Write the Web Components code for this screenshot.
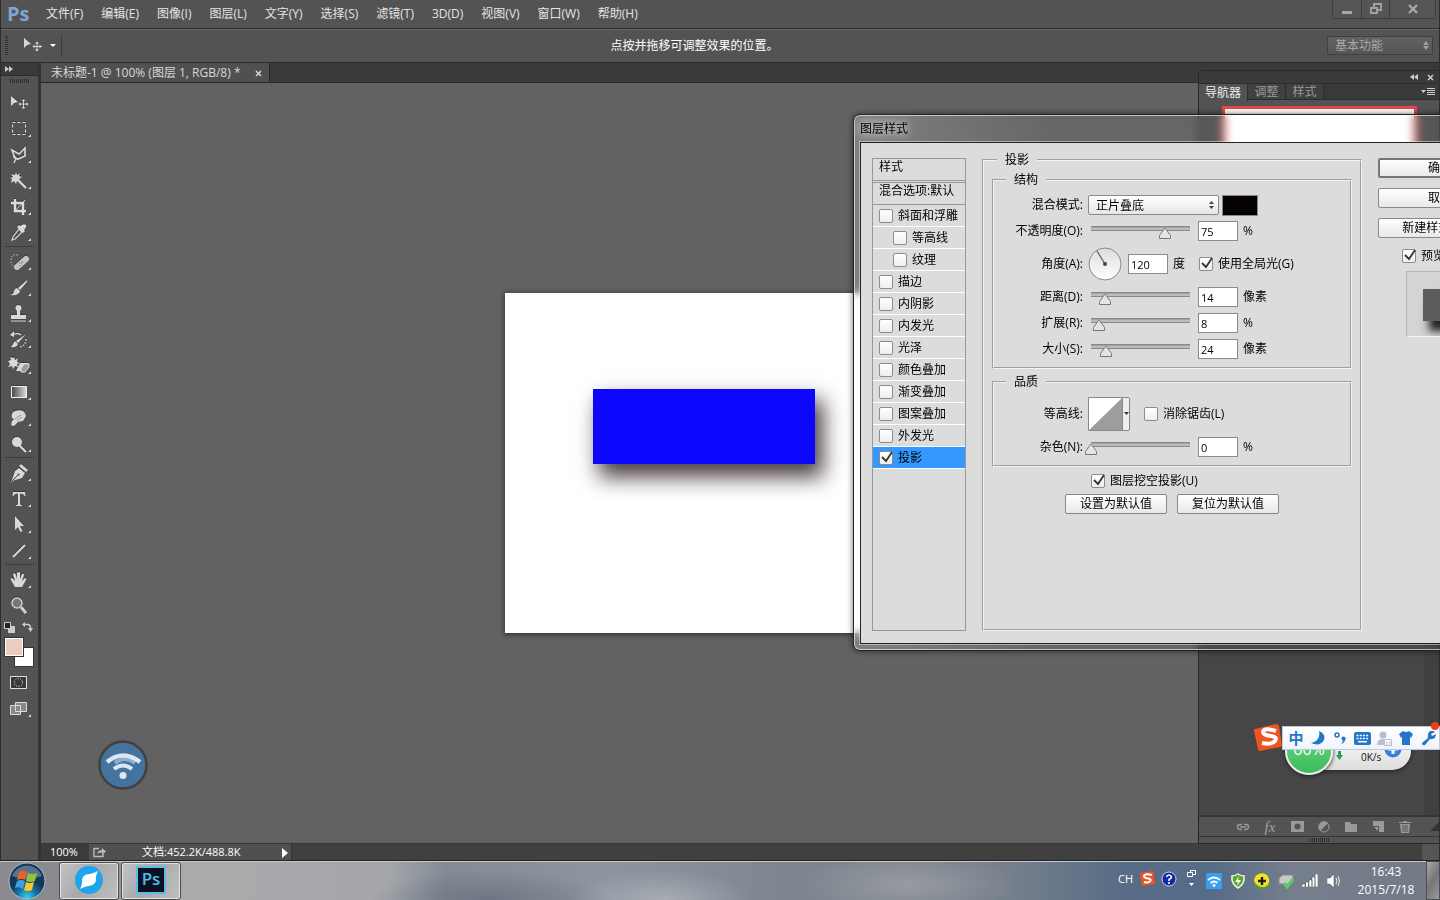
<!DOCTYPE html>
<html lang="zh-CN">
<head>
<meta charset="utf-8">
<title>未标题-1 @ 100%</title>
<style>
  html, body { height: 100%; margin: 0; }
  body {
    overflow: hidden;
    font: 12px/16px "Open Sans", "Noto Sans CJK SC", sans-serif;
    color: #e4e4e4;
    background: #535353;
  }
</style>
</head>
<body>
<ps-desktop></ps-desktop>

<script>
const define = (name, css, markup) => {
  customElements.define(name, class extends HTMLElement {
    connectedCallback() {
      if (this.shadowRoot) return;
      const template = document.createElement('template');
      const html = typeof markup === 'function' ? markup(this) : markup;
      template.innerHTML = `<style>*{box-sizing:border-box}
        button,input,select{font:inherit;color:inherit;margin:0}
        ${css}</style>${html}`;
      this.attachShadow({ mode: 'open' }).append(template.content.cloneNode(true));
    }
  });
};

/* ---------- menu bar ---------- */
define('ps-menubar', `
  :host { display: flex; align-items: center; height: 28px; background: #535353; padding-left: 6px; }
  .logo { width: 25px; font: bold 20px/28px "Open Sans", sans-serif; color: #7ba6d6; margin-right: 5px; }
  nav { display: flex; flex: 1; }
  nav button { background: none; border: 0; padding: 0 9px; line-height: 28px; white-space: nowrap; }
  .win { display: flex; align-self: flex-start; height: 19px; margin-right: 3px; border: 1px solid #3e3e3e; border-top: 0; border-radius: 0 0 3px 3px; }
  .win button { width: 28px; padding: 0; border: 0; background: #555; display: grid; place-items: center; }
  .win button + button { border-left: 1px solid #3e3e3e; }
  .win button:last-child { width: 46px; }
`, `
  <span class="logo">Ps</span>
  <nav aria-label="菜单">
    ${['文件(F)', '编辑(E)', '图像(I)', '图层(L)', '文字(Y)', '选择(S)', '滤镜(T)', '3D(D)', '视图(V)', '窗口(W)', '帮助(H)']
      .map(t => `<button>${t}</button>`).join('')}
  </nav>
  <div class="win">
    <button aria-label="最小化"><svg width="12" height="14"><path d="M1 9h10v3H1z" fill="#a8a8a8"/></svg></button>
    <button aria-label="还原"><svg width="14" height="14" fill="none" stroke="#a0a0a0" stroke-width="2"><path d="M5 7V2h7v6H9"/><path d="M2 6h6v5H2z"/></svg></button>
    <button aria-label="关闭"><svg width="12" height="12" stroke="#a8a8a8" stroke-width="2.4"><path d="M2 2l8 8M10 2l-8 8"/></svg></button>
  </div>`);

/* ---------- options bar ---------- */
define('ps-optionsbar', `
  :host { display: grid; grid-template-columns: auto 1fr auto; align-items: center; height: 35px;
    background: #535353; border-top: 1px solid #2e2e2e; border-bottom: 1px solid #2e2e2e; box-shadow: inset 0 1px #666; }
  .left { display: flex; align-items: center; padding-left: 4px; }
  .grip { width: 3px; height: 20px; background: repeating-linear-gradient(#333 0 1px, transparent 1px 2px); margin-right: 15px; }
  .tool { display: flex; align-items: center; gap: 8px; padding: 0 5px 0 0; border: 0; border-right: 1px solid #3c3c3c; background: none; height: 23px; }
  p { margin: 0; color: #fff; text-align: center; }
  .right { position: relative; margin-right: 6px; }
  select { appearance: none; width: 106px; height: 19px; padding: 0 7px; line-height: 16px; border: 1px solid #404040; border-radius: 2px;
    background: linear-gradient(#626262, #555); color: #a8a8a8; display: block; }
  .right svg { position: absolute; right: 4px; top: 5px; }
`, `
  <div class="left"><span class="grip"></span>
    <button class="tool" aria-label="移动工具">
      <svg width="19" height="17" fill="#d8d8d8"><path d="M1 1l7 6-4 1-3 3z"/><path d="M14 5v9M10 9.500h9" stroke="#d8d8d8"/><path d="M14 4.500l2 2h-4zM14 14.500l2-2h-4zM9.500 9.500l2-2v4zM18.500 9.500l-2-2v4z"/></svg>
      <svg width="6" height="4" fill="#fff"><path d="M0 0h6L3 3z"/></svg>
    </button></div>
  <p>点按并拖移可调整效果的位置。</p>
  <div class="right"><select aria-label="工作区"><option>基本功能</option></select>
    <svg width="6" height="9" fill="#a0a0a0"><path d="M0 4l3-4 3 4zM0 5h6L3 9z"/></svg></div>`);

/* ---------- toolbox ---------- */
const glyphs = {
  move: '<path d="M10 6l7 6-4 1-3 3z"/><path d="M22.500 10v8M18.500 14h8" stroke="#d8d8d8"/><path d="M22.500 9l2 2h-4zM22.500 19l2-2h-4zM17.500 14l2-2v4zM27.500 14l-2-2v4z"/>',
  marquee: '<path d="M11.500 6.500h13v12h-13z" fill="none" stroke="#e0e0e0" stroke-dasharray="3 2"/>',
  lasso: '<path d="M11 8l7 4 6-6v8l-7 3-3-1z" fill="none" stroke="#d8d8d8" stroke-width="1.700"/><path d="M12 15q3-1 3 2-1 1-2 4" fill="none" stroke="#d8d8d8" stroke-width="1.500"/>',
  wand: '<path d="M15 4l1 3 3-2-1 3 3 1-3 2 2 3-4-1-1 3-2-3-3 2 1-4-2-1 3-1-2-3 4 1z"/><path d="M17 12l8 8" stroke="#d8d8d8" stroke-width="2.400"/>',
  crop: '<path d="M14 5v12h11M10 9h12v12" fill="none" stroke="#dcdcdc" stroke-width="2.400"/><path d="M15 16l9-10" stroke="#dcdcdc"/>',
  dropper: '<path d="M19 6q4-3 6-1 1 2-2 5l1 1-2 2-6-6 2-2z"/><path d="M18 9l3 3-7 7-3 1 1-3z" fill="none" stroke="#dcdcdc" stroke-width="1.200"/>',
  heal: '<path d="M17 6q-7-2-7 6 0 3 2 5" fill="none" stroke="#ddd" stroke-dasharray="1.500 1.500"/><path d="M16 18l9-8" stroke="#c4c4c4" stroke-width="6" stroke-linecap="round"/><path d="M18 14l5-1M19 17l3-5" stroke="#777" stroke-dasharray="1 1.500"/>',
  brush: '<path d="M26 5q1 1-1 3l-6 7-2-2z"/><path d="M16 13l3 3q-1 5-10 4 4-1 4-4 1-3 3-3z"/>',
  stamp: '<circle cx="17.500" cy="7" r="3"/><path d="M16 9h3v5h6v4H10v-4h6zM10 19.500h15v1H10z"/>',
  history: '<path d="M25 7l-8 9-2-2zM14 14l3 3q-2 4-7 3 2-3 4-6z"/><path d="M11 8q6-3 9 0" fill="none" stroke="#d0d0d0" stroke-width="1.500"/><path d="M9 8l4-4v6z"/><path d="M25 12q0 7-7 8" fill="none" stroke="#d0d0d0" stroke-width="1.500" stroke-dasharray="1.500 1.500"/>',
  eraser: '<path d="M13 4l1 3 3-2-1 4 3 1-3 1 1 3-3-1-2 3-1-3-4 1 2-3-2-3 3-1-1-3 3 1z"/><path d="M19 10h9l-4 8h-9z"/><path d="M20 16l3-5h5v3l-4 5h-4z" fill="#999" stroke="#ddd"/>',
  gradient: '<defs><linearGradient id="g"><stop stop-color="#444"/><stop offset="1" stop-color="#ddd"/></linearGradient></defs><path d="M10.500 7.500h15v11h-15z" fill="url(#g)" stroke="#f0f0f0"/>',
  smudge: '<path d="M12 7q5-3 10-1 3 2 3 5l-3 5-5 1-4 4-3-1 1-4 2-2-2-1q-1-3 1-6z"/><path d="M14 14l6-4M16 16l5-4" stroke="#999"/>',
  dodge: '<circle cx="16" cy="11" r="5"/><path d="M18 14l7 7" stroke="#ddd" stroke-width="2"/>',
  pen: '<path d="M18 8l6 5-3 5-7 2-4 2 2-5 2-6z"/><path d="M20 4l7 6-2 2-7-6z"/><path d="M11 21l6-6" stroke="#444"/><circle cx="17.500" cy="14.500" r="1" fill="#444"/>',
  type: '<path d="M12 6h12l.5 4h-1q-.5-2.500-4.500-2.500V18q0 1 2 1v1h-6v-1q2 0 2-1V7.500q-4 0-4.500 2.500h-1z"/>',
  select: '<path d="M14 4l9 10h-4l2.500 5-2 1-2.500-5-3 3z"/>',
  line: '<path d="M12 19L24 7" stroke="#ddd" stroke-width="1.800"/>',
  hand: '<path d="M14 20l-4-7q-1-2 1-2l3 3-2-7q2-2 3 1l1 4V6q2-2 3 0v6l2-5q2-1 2 1l-2 6 3-3q2 0 1 2l-4 7z"/>',
  zoom: '<circle cx="16" cy="10" r="5" fill="#777" stroke="#ccc" stroke-width="1.500"/><path d="M20 14l5 6" stroke="#d0d0d0" stroke-width="3"/>'
};
define('ps-tool', `
  :host { display: block; height: 26px; }
  button { display: block; border: 0; padding: 0; background: none; height: 26px; width: 37px; }
  svg { display: block; fill: #d8d8d8; filter: drop-shadow(0 -1px 0 #3a3a3a); }
`, el => `<button aria-label="${el.getAttribute('label')}"><svg width="37" height="26">${glyphs[el.getAttribute('glyph')]}
  ${el.hasAttribute('single') ? '' : '<path d="M30 18v3h-3z"/>'}</svg></button>`);

define('ps-toolbox', `
  :host { display: flex; flex-direction: column; width: 40px; background: #535353; border-right: 3px solid #333; }
  .head { height: 13px; background: #3a3a3a; border-bottom: 1px solid #2b2b2b; padding: 3px 4px; }
  .head svg { display: block; }
  .grip { height: 14px; display: grid; place-items: start center; padding-top: 3px; }
  .grip i { width: 19px; height: 4px; background: repeating-linear-gradient(90deg, #303030 0 1px, transparent 1px 2px); }
  hr { margin: 0 4px; height: 3px; border: 0; border-top: 1px solid #3a3a3a; width: 29px; }
  .mini { display: flex; justify-content: space-between; height: 18px; padding: 3px 5px 0 3px; }
  .colors { display: grid; height: 32px; padding-left: 3px; grid-template: 10px 10px 10px / 10px 10px 10px; }
  .colors button { border: 1px solid #333; padding: 0; }
  .fg { grid-area: 1 / 1 / 3 / 3; background: #eacdbf; box-shadow: inset 0 0 0 1px #fff; z-index: 1; }
  .bg { grid-area: 2 / 2 / 4 / 4; background: #fff; }
  .mode { border: 0; padding: 0; background: none; height: 27px; display: block; }
  .mode svg { display: block; }
`, () => {
  const tool = ([glyph, label]) => `<ps-tool glyph="${glyph}" label="${label}"${['move', 'zoom'].includes(glyph) ? ' single' : ''}></ps-tool>`;
  const groups = [
    [['move', '移动'], ['marquee', '选框'], ['lasso', '套索'], ['wand', '魔棒'], ['crop', '裁剪'], ['dropper', '吸管']],
    [['heal', '修复画笔'], ['brush', '画笔'], ['stamp', '图章'], ['history', '历史画笔'], ['eraser', '橡皮擦'], ['gradient', '渐变'], ['smudge', '涂抹'], ['dodge', '减淡']],
    [['pen', '钢笔'], ['type', '文字'], ['select', '路径选择'], ['line', '直线']],
    [['hand', '抓手'], ['zoom', '缩放']]];
  return `<div class="head"><svg width="8" height="6" fill="#ccc"><path d="M0 0l4 3-4 3zM4 0l4 3-4 3z"/></svg></div>
  <div class="grip"><i></i></div>
  ${groups.map(g => g.map(tool).join('')).join('<hr>')}
  <div class="mini">
    <svg width="11" height="11"><path d="M4 4h7v7H4z" fill="#ccc"/><path d="M.5.500h6v6h-6z" fill="#222" stroke="#ccc"/></svg>
    <svg width="11" height="10" fill="#ccc"><path d="M3 0v5L0 2.500zM11 6H6l2.500 4z"/><path d="M3 2.500h3q2.500 0 2.500 4" fill="none" stroke="#ccc" stroke-width="1.500"/></svg>
  </div>
  <div class="colors"><button class="fg" aria-label="前景色"></button><button class="bg" aria-label="背景色"></button></div>
  <button class="mode" aria-label="快速蒙版"><svg width="37" height="27"><path d="M9.500 7.500h16v12h-16z" fill="#383838" stroke="#e0e0e0"/><circle cx="17.500" cy="13.500" r="4" fill="none" stroke="#eee" stroke-dasharray="1 1.500"/></svg></button>
  <button class="mode" aria-label="屏幕模式"><svg width="37" height="27" fill="#888" stroke="#ddd"><path d="M9.500 9.500h10v9h-10zM14.500 6.500h11v9h-11z"/><path d="M30 18v3h-3z" fill="#ccc" stroke="none"/></svg></button>`;
});

/* ---------- document ---------- */
define('ps-document', `
  :host { display: flex; flex-direction: column; min-width: 0; flex: 1; }
  .tabs { height: 20px; background: #393939; border-bottom: 1px solid #2a2a2a; display: flex; }
  .tab { display: flex; align-items: center; gap: 14px; background: #505050; border-right: 1px solid #2a2a2a; padding: 1px 7px 0 10px; white-space: pre; color: #d8d8d8; }
  .tab button { border: 0; background: none; padding: 0; display: grid; }
  .area { flex: 1; min-height: 0; background: #626262; display: grid; place-items: center; padding-right: 16px; }
  .paper { width: 454px; height: 340px; background: #fff; padding: 96px 88px; box-shadow: 0 1px 5px 1px rgba(0,0,0,.45); }
  .shape { width: 222px; height: 75px; background: #0c06ff; box-shadow: 7px 12px 20px 1px rgba(22,8,12,.78); }
  .status { display: flex; height: 17px; background: #404040; border-top: 1px solid #383838; line-height: 16px; color: #fff; font-size: 11px; justify-content: space-between; }
  .info { display: flex; width: 251px; background: #505050; border-right: 1px solid #333; align-items: center; }
  .zoom { width: 48px; height: 16px; background: #3b3b3b; padding: 0 9px; border: 0; color: #fff; }
  .info svg { margin-left: 4px; }
  .info span { flex: 1; padding-left: 35px; white-space: nowrap; }
  .info svg:last-child { margin-right: 3px; }
  .corner { width: 17px; background: #555; }
`, `
  <div class="tabs"><div class="tab"><span>未标题-1 @ 100% (图层 1, RGB/8) *</span>
    <button aria-label="关闭文档"><svg width="7" height="7" stroke="#d8d8d8" stroke-width="1.500"><path d="M1 1l5 5M6 1L1 6"/></svg></button></div></div>
  <div class="area"><div class="paper"><div class="shape"></div></div></div>
  <div class="status"><div class="info"><input class="zoom" aria-label="缩放比例" value="100%">
    <svg width="14" height="11" fill="none" stroke="#bbb" stroke-width="1.400"><path d="M6 1.500H1v8h9V7"/><path d="M4 7q1-4 5-4V1l4 3.500L9 8V5.500Q6 5 4 7z" fill="#bbb" stroke="none"/></svg>
    <span>文档:452.2K/488.8K</span>
    <svg width="6" height="11" fill="#fff"><path d="M0 1l6 5-6 5z"/></svg></div><div class="corner"></div></div>`);

/* ---------- floating panel ---------- */
define('ps-panel', `
  :host { display: flex; flex-direction: column; background: #535353; border: 1px solid #282828; border-right: 0; border-radius: 4px 0 0 0; }
  .head { height: 12px; background: #3a3a3a; display: flex; justify-content: flex-end; align-items: center; gap: 9px; padding: 0 5px 0 0; }
  .tabs { display: flex; height: 17px; background: #3a3a3a; border-bottom: 1px solid #2d2d2d; border-top: 1px solid #2d2d2d; }
  .tabs button { border: 0; border-right: 1px solid #2d2d2d; background: #404040; color: #999; padding: 0 6px; line-height: 15px; width: 38px; }
  .tabs button[aria-selected=true] { background: #535353; color: #eee; width: 49px; height: 17px; }
  .tabs svg { margin: 4px 4px 0 auto; }
  .nav { height: 160px; padding: 6px 22px 0 23px; }
  .thumb { height: 145px; background: #fff; border: 3px solid #e5484c; }
  .layers { flex: 1; background: #464646; border-right: 15px solid #404040; }
  .tools { height: 21px; display: flex; align-items: center; gap: 9px; padding: 0 0 0 35px; border-top: 2px solid #363636; }
  .tools button { border: 0; background: none; padding: 0; display: grid; place-items: center; width: 18px; }
  .tools svg { fill: #999; }
  .tools > svg { margin-left: auto; }
  .fx { font: italic 15px/16px "Liberation Serif", serif; color: #a0a0a0; }
  .grip { height: 7px; border-top: 1px solid #363636; display: grid; place-items: center; }
  .grip i { width: 19px; height: 4px; background: repeating-linear-gradient(90deg, #303030 0 1px, transparent 1px 2px); }
`, `
  <div class="head"><svg width="8" height="6" fill="#ccc"><path d="M4 0v6L0 3zM8 0v6L4 3z"/></svg>
    <svg width="7" height="7" stroke="#ccc" stroke-width="1.500"><path d="M1 1l5 5M6 1L1 6"/></svg></div>
  <div class="tabs" role="tablist"><button role="tab" aria-selected="true">导航器</button><button role="tab">调整</button><button role="tab">样式</button>
    <svg width="14" height="9" fill="#ccc"><path d="M0 2h5L2.500 5zM6 0h8v1H6zM6 2h8v1H6zM6 4h8v1H6zM6 6h8v1H6z"/></svg></div>
  <div class="nav"><div class="thumb"></div></div>
  <div class="layers"></div>
  <div class="tools">
    <button aria-label="链接图层"><svg width="14" height="8" viewBox="0 0 14 8"><path d="M6 1.500H4a2.500 2.500 0 000 5h2M8 1.500h2a2.500 2.500 0 010 5H8M4 4h6" fill="none" stroke="#999" stroke-width="1.500"/></svg></button>
    <button class="fx">fx</button>
    <button aria-label="蒙版"><svg width="13" height="11"><path fill-rule="evenodd" d="M0 0h13v11H0zM6.500 2.500a3 3 0 100 6 3 3 0 000-6z"/></svg></button>
    <button aria-label="调整图层"><svg width="12" height="12"><circle cx="6" cy="6" r="5" fill="none" stroke="#999"/><path d="M10 2A5 5 0 102 10z"/></svg></button>
    <button aria-label="新建组"><svg width="12" height="10"><path d="M0 0h5l1 2h6v8H0z"/></svg></button>
    <button aria-label="新建图层"><svg width="11" height="11"><path d="M0 0h11v11H6V5H0z"/><path d="M1 6h4v4z"/></svg></button>
    <button aria-label="删除"><svg width="12" height="12"><path d="M4 0h4v1h4v1H0V1h4zM1 3h10l-1 9H2z"/><path d="M4 4v7M6 4v7M8 4v7" stroke="#555"/></svg></button>
    <svg width="9" height="9"><path d="M9 0v9H0z" style="fill:#333"/></svg>
  </div>
  <div class="grip"><i></i></div>`);

/* ---------- dialog controls ---------- */
define('ps-check', `
  :host { display: block; }
  label { display: flex; align-items: center; gap: 5px; white-space: nowrap; }
  input { appearance: none; width: 14px; height: 14px; flex: none; border: 1px solid #8c8c8c; border-radius: 2px; background: linear-gradient(#fff, #eee); }
  span { display: grid; }
  span > * { grid-area: 1 / 1; }
  svg { display: none; z-index: 1; overflow: visible; pointer-events: none; }
  input:checked + svg { display: block; }
`, el => `<label><span><input type="checkbox"${el.hasAttribute('checked') ? ' checked' : ''}>
  <svg width="14" height="14"><path d="M3 6l4 4 6-9" fill="none" stroke="#333" stroke-width="1.800"/></svg></span><slot></slot></label>`);

define('ps-field', `
  :host { display: grid; grid-template-columns: 89px 105px 40px 1fr; column-gap: 5px; align-items: center; height: 26px; }
  label { text-align: right; white-space: nowrap; }
  .track { height: 20px; margin: 0 3px; background: linear-gradient(#888 1px, #a4a4a4 1px 2px, #bcbcbc 2px 4px, #888 4px) 0 5px / 100% 5px no-repeat; }
  .range { appearance: none; display: block; background: none; width: 111px; height: 20px; margin: 0 -6px; }
  .range::-webkit-slider-runnable-track { height: 20px; }
  .range::-webkit-slider-thumb { appearance: none; width: 12px; height: 11px; margin-top: 7px;
    background: url("data:image/svg+xml,%3Csvg xmlns='http://www.w3.org/2000/svg' width='12' height='11'%3E%3Cpath d='M.5 7.500L5.500.500h1L11.500 7.500v3H.5z' fill='%23e4e4e4' stroke='%23777'/%3E%3C/svg%3E"); }
  .num { width: 40px; height: 20px; border: 1px solid #8a8a8a; background: #fff; padding: 0 2px; font-size: 11px; }
`, el => {
  const a = n => el.getAttribute(n);
  return `<label for="num">${a('label')}</label>
    <div class="track"><input class="range" type="range" min="0" max="${a('max') || 100}" value="${a('value')}" aria-label="${a('label')}"></div>
    <input class="num" id="num" value="${a('value')}"><span>${a('unit')}</span>`;
});

/* ---------- layer style dialog ---------- */
define('layer-style-dialog', `
  :host { display: flex; flex-direction: column; color: #000; border: 1px solid #222; border-radius: 7px; padding: 0 6px 6px;
    background: linear-gradient(90deg, rgba(255,255,255,.2), rgba(255,255,255,.03) 200px); backdrop-filter: blur(5px);
    box-shadow: inset 0 0 0 1px rgba(255,255,255,.6), 0 0 6px rgba(0,0,0,.6); }
  h1 { margin: 0; font: inherit; line-height: 27px; height: 27px; text-shadow: 0 0 6px #ccc, 0 0 10px #ccc, 0 0 14px #bbb; }
  .client { flex: 1; background: #dcdcdc; border: 1px solid #222; outline: 1px solid rgba(255,255,255,.45); display: flex; padding: 9px 14px 12px 11px; align-items: stretch; }
  .styles { flex: none; width: 94px; margin: 6px 16px 0 0; padding: 0; border: 1px solid #999; list-style: none; }
  .styles li { height: 22px; padding: 0 0 0 6px; display: flex; align-items: center; border-bottom: 1px solid #fff; white-space: nowrap; }
  .styles li.top { border-bottom: 3px double #999; height: 24px; padding-bottom: 5px; }
  .styles li.blend { border-bottom: 1px solid #999; padding-bottom: 5px; }
  .styles li.sub { padding-left: 20px; }
  .styles li.on { background: #3399ff; }
  .styles button { border: 0; padding: 0; background: none; }
  fieldset { border: 2px groove #f2f2f2; margin: 0; min-width: 0; }
  legend { margin-left: 12px; padding: 0 8px; height: 16px; }
  .main { flex: none; width: 380px; padding: 4px 8px 0; }
  .main > legend { margin-left: 5px; }
  .box { padding: 4px 0 5px; margin-bottom: 5px; }
  .row { display: grid; grid-template-columns: 89px auto; column-gap: 5px; align-items: center; height: 26px; justify-content: start; }
  .row.tall { height: 40px; }
  .row > label, .row > .lab { text-align: right; white-space: nowrap; }
  .line { display: flex; align-items: center; }
  .pick { position: relative; }
  .pick svg { position: absolute; right: 5px; top: 6px; }
  select { appearance: none; display: block; width: 131px; height: 20px; border: 1px solid #8a8a8a; border-radius: 2px; background: linear-gradient(#fff, #e6e6e6); padding: 1px 7px 0; line-height: 16px; }
  .color { width: 36px; height: 21px; padding: 0; background: #050001; border: 1px solid #888; margin-left: 3px; }
  .num { width: 40px; height: 20px; border: 1px solid #8a8a8a; background: #fff; padding: 0 2px; font-size: 11px; margin: 0 5px 0 6px; }
  .dial { display: block; }
  .gap { margin-left: 14px; }
  .curve { padding: 0; display: flex; border: 1px solid #888; border-radius: 0 2px 2px 0; background: #eee; height: 34px; width: 42px; }
  .after { width: fit-content; margin: 6px auto 0; display: flex; flex-direction: column; gap: 5px; }
  .after ps-check { margin-left: 26px; }
  .pair { display: flex; gap: 10px; }
  .btn { height: 20px; border: 1px solid #888; border-radius: 2px; background: linear-gradient(#fff, #e8e8e8); padding: 0; width: 102px; line-height: 16px; white-space: nowrap; }
  .side { flex: none; display: flex; flex-direction: column; gap: 10px; margin: 6px 0 0 16px; width: 124px; }
  .side .btn { width: 124px; }
  .side .ok { border: 2px solid #777; }
  .side ps-check { margin-left: 24px; }
  .preview { margin: -3px 0 0 28px; width: 66px; height: 66px; border: 1px solid #b4b4b4; border-right-color: #f4f4f4; border-bottom-color: #f4f4f4; background: #d4d4d4; padding: 17px 16px; overflow: hidden; }
  .preview i { display: block; width: 32px; height: 32px; background: #5c5c5c; box-shadow: 6px 10px 8px #222; }
`, `
  <h1>图层样式</h1>
  <div class="client">
    <ul class="styles">
      <li class="top"><button>样式</button></li>
      <li class="blend"><button>混合选项:默认</button></li>
      ${['斜面和浮雕', '-等高线', '-纹理', '描边', '内阴影', '内发光', '光泽', '颜色叠加', '渐变叠加', '图案叠加', '外发光']
        .map(t => `<li${t[0] === '-' ? ' class="sub"' : ''}><ps-check>${t.replace('-', '')}</ps-check></li>`).join('')}
      <li class="on"><ps-check checked>投影</ps-check></li>
    </ul>
    <fieldset class="main"><legend>投影</legend>
      <fieldset class="box"><legend>结构</legend>
        <div class="row"><label for="mode">混合模式:</label><div class="line"><div class="pick"><select id="mode"><option>正片叠底</option></select>
          <svg width="5" height="8" fill="#444"><path d="M0 3l2.500-3L5 3zM0 5h5L2.500 8z"/></svg></div><button class="color" aria-label="阴影颜色"></button></div></div>
        <ps-field label="不透明度(O):" value="75" unit="%"></ps-field>
        <div class="row tall"><label for="angle">角度(A):</label><div class="line">
          <svg class="dial" width="34" height="34"><defs><linearGradient id="d" x2="0" y2="1"><stop stop-color="#ddd"/><stop offset="1" stop-color="#fff"/></linearGradient></defs><circle cx="17" cy="17" r="16" fill="url(#d)" stroke="#888"/><path d="M17 17L9 4" stroke="#666" stroke-width="1.400"/><circle cx="17" cy="17" r="2" fill="#444"/></svg>
          <input class="num" id="angle" value="120"><span>度</span><ps-check class="gap" checked>使用全局光(G)</ps-check></div></div>
        <ps-field label="距离(D):" value="14" unit="像素"></ps-field>
        <ps-field label="扩展(R):" value="8" unit="%"></ps-field>
        <ps-field label="大小(S):" value="24" max="160" unit="像素"></ps-field>
      </fieldset>
      <fieldset class="box"><legend>品质</legend>
        <div class="row tall"><span class="lab">等高线:</span><div class="line">
          <button class="curve" aria-label="等高线"><svg width="40" height="32"><path d="M0 0h33v32H0z" fill="#fff"/><path d="M0 32L33 0v32z" fill="#9d9d9d"/><path d="M33.500 0v32" stroke="#888"/><path d="M35 14h5l-2.500 3z" fill="#333"/></svg></button>
          <ps-check class="gap">消除锯齿(L)</ps-check></div></div>
        <ps-field label="杂色(N):" value="0" unit="%"></ps-field>
      </fieldset>
      <div class="after"><ps-check checked>图层挖空投影(U)</ps-check>
        <div class="pair"><button class="btn">设置为默认值</button><button class="btn">复位为默认值</button></div></div>
    </fieldset>
    <div class="side"><button class="btn ok">确定</button><button class="btn">取消</button><button class="btn">新建样式(W)...</button>
      <ps-check checked>预览(V)</ps-check><div class="preview"><i></i></div></div>
  </div>`);

/* ---------- desktop gadgets ---------- */
define('wifi-badge', `:host { display: block; width: 50px; height: 50px; } svg { display: block; }`, `
  <svg width="50" height="50" fill="none"><circle cx="25" cy="25" r="23.500" fill="#44749e" stroke="#414141" stroke-width="2.500"/>
  <path d="M17 23q10-8 20 0" stroke="#8fb0cd" stroke-width="4"/><path d="M9 22q16-13 33 0" stroke="#dbe8f4" stroke-width="4.500"/><path d="M16 29q9-7 18 0" stroke="#dbe8f4" stroke-width="4"/><circle cx="25" cy="35.500" r="3.500" fill="#dbe8f4"/></svg>`);

define('net-meter', `
  :host { display: flex; align-items: center; color: #111; isolation: isolate; }
  .ball { width: 48px; height: 48px; border-radius: 50%; border: 2px solid #eee; background: linear-gradient(#6edb86, #3cba5a); box-shadow: 0 1px 4px #222; color: #fff; font-size: 16px; line-height: 40px; text-align: center; z-index: 1; }
  .pill { width: 94px; height: 38px; margin-left: -16px; padding: 18px 8px 0 19px; border-radius: 0 19px 19px 0; background: linear-gradient(#fff, #ddd); box-shadow: 0 1px 4px #222; display: flex; font-size: 10px; line-height: 14px; }
  .pill span { margin-left: 18px; white-space: nowrap; }
  .down { margin-top: 1px; flex: none; }
  .plus { margin: -10px 0 0 3px; flex: none; }
`, `<div class="ball">60%</div><div class="pill"><svg class="down" width="7" height="9" fill="#2f9a58"><path d="M2 0h3v4h2L3.500 9 0 4h2z"/></svg><span>0K/s</span>
  <svg class="plus" width="18" height="18"><circle cx="9" cy="9" r="8.500" fill="#3a80d8"/><path d="M9 4v10M4 9h10" stroke="#fff" stroke-width="3"/></svg></div>`);

define('ime-bar', `
  :host { display: flex; align-items: center; isolation: isolate; }
  .logo { width: 28px; height: 28px; z-index: 1; flex: none; overflow: visible; }
  .bar { flex: 1; height: 24px; background: linear-gradient(#fff, #f0f4fa); border: 1px solid #b8cbe0; display: flex; align-items: center; padding-left: 2px; position: relative; }
  button { width: 22px; padding: 0; border: 0; background: none; color: #2476c8; display: grid; place-items: center; font-weight: bold; font-size: 15px; line-height: 20px; }
  svg { fill: #2476c8; }
  .dot { position: absolute; right: 0; top: -5px; width: 8px; height: 8px; border-radius: 50%; background: #ee4014; }
`, `
  <svg class="logo" viewBox="0 0 28 28"><path d="M1 5L22 0q2 0 3 2l3 19q0 2-2 2L6 27q-2 0-2-2L0 7q0-2 1-2z" fill="#f0531f"/><path d="M22 7q-12-4-13 1 0 3 8 4 7 1 4 5-3 4-13 2" fill="none" stroke="#fff" stroke-width="4"/></svg>
  <div class="bar"><button>中</button>
    <button aria-label="全半角"><svg width="14" height="14"><path d="M8 0q7 3 5 9-4 7-13 3 10-2 8-12z"/></svg></button>
    <button aria-label="标点"><svg width="13" height="12"><circle cx="3" cy="3" r="2" fill="none" stroke="#2476c8" stroke-width="1.500"/><circle cx="9.500" cy="6.500" r="2"/><path d="M11.500 6q0 4-4 6l2-5z"/></svg></button>
    <button aria-label="软键盘"><svg width="17" height="13"><rect width="17" height="13" rx="2"/><path d="M2.500 3.500h12M2.500 6.500h12" stroke="#fff" stroke-width="1.700" stroke-dasharray="2 1.200"/><path d="M4 9.700h9" stroke="#fff" stroke-width="1.500"/></svg></button>
    <button aria-label="用户"><svg width="15" height="15" style="fill:#b4bed2"><circle cx="6" cy="4" r="3.500"/><path d="M0 14q0-6 6-6t6 6z"/><path d="M7.500 8.500h7v6h-7z" fill="#fff" stroke="#b4bed2"/><path d="M9 11h1v3M12 11h1v3" fill="none" stroke="#b4bed2"/></svg></button>
    <button aria-label="皮肤"><svg width="14" height="14"><path d="M4 0q3 2 6 0l4 3-2 4-1-1v8H3V6L2 7 0 3z"/></svg></button>
    <button aria-label="工具"><svg width="15" height="15"><path d="M9 0q3-1 5 1l-4 2 1 2 4-2q0 6-6 5l-5 6q-3 1-3-2l6-5Q6 2 9 0z"/></svg></button>
    <span class="dot"></span></div>`);

/* ---------- taskbar ---------- */
define('win-taskbar', `
  :host { display: flex; height: 40px; border-top: 1px solid #222; box-shadow: inset 0 1px #c8c8ca; color: #fff;
    background:
      radial-gradient(ellipse 90px 30px at 46% 100%, rgba(190,192,198,.6), transparent),
      radial-gradient(ellipse 110px 34px at 63% 60%, rgba(165,165,168,.7), transparent),
      radial-gradient(ellipse 120px 30px at 34% 100%, rgba(92,102,116,.6), transparent),
      linear-gradient(90deg, #8b8b8f 0, #8b8b8f 59px, #ababad 190px, #a4a6aa 27%, #838b95 31%, #8d959f 42%, #7d858f 55%, #76808c 70%, #586c86 78%, #566b88 84%, #767f8c 90%, #727a86); }
  .start { width: 59px; border: 0; background: none; padding: 0 0 0 8px; }
  .start svg, .app svg { display: block; }
  .app { width: 60px; margin: 1px 2px 0 0; border: 1px solid #4c4c4e; border-radius: 3px; box-shadow: inset 0 0 0 1px rgba(255,255,255,.6); background: linear-gradient(120deg, #c4c4c6, #a9a9ab 45%, #bfbfc0); padding: 0 0 2px; display: grid; place-items: center; }
  .ps { width: 30px; height: 28px; border: 2px solid #55bfe8; background: #0f0f24; color: #4fc0ea; font: 600 17px/22px "Open Sans", sans-serif; text-align: center; }
  .tray { margin-left: auto; display: flex; align-items: center; }
  .ch { font-size: 11px; margin-right: 3px; padding-bottom: 4px; }
  .a, .b { border: 0; background: none; padding: 0; display: grid; place-items: center; width: 22px; padding-bottom: 4px; }
  .b { width: 24px; padding: 0; }
  time { width: 80px; text-align: center; line-height: 18px; }
  .show { width: 14px; align-self: stretch; border: 1px solid #4a4e55; background: linear-gradient(120deg, #aaa, #777 50%, #999); padding: 0; }
`, `
  <button class="start" aria-label="开始"><svg width="38" height="38"><defs><radialGradient id="o" cy=".95"><stop stop-color="#35d4f5"/><stop offset=".5" stop-color="#1878a8"/><stop offset="1" stop-color="#14375a"/></radialGradient></defs>
    <circle cx="19" cy="19" r="18" fill="url(#o)" stroke="#9fc0d6"/><path d="M4 14A16 16 0 0134 14Q19 20 4 14z" fill="#fff" opacity=".3"/>
    <path d="M11 10q4-3 8 0l-2 8q-4-2-8 0z" fill="#ea6226"/><path d="M20 11q4 2 9 0l-2 8q-4 2-9 0z" fill="#8cc63f"/><path d="M9 19q4-2 8 0l-2 8q-4-3-8-1z" fill="#3ba2e8"/><path d="M18 20q4 2 8 0l-2 8q-4 2-8 0z" fill="#fcc52c"/></svg></button>
  <button class="app" aria-label="浏览器"><svg width="28" height="28"><circle cx="14" cy="14" r="14" fill="#1ea5ee"/><path d="M23 5q-2 4-2 6 1 8-7 9-3 0-9 3 2-4 2-6-1-9 8-9 4-1 8-3z" fill="#fff"/></svg></button>
  <button class="app" aria-label="Photoshop"><div class="ps">Ps</div></button>
  <div class="tray"><span class="ch">CH</span>
    <button class="a" aria-label="输入法"><svg width="15" height="15"><path d="M0 2l13-2 2 13-13 2z" fill="#ee5522"/><path d="M12 4Q5 2 4 5q0 2 4 2.500 4 .5 2 3-2 1.500-6 .5" fill="none" stroke="#fff" stroke-width="2"/></svg></button>
    <button class="a" aria-label="帮助"><svg width="16" height="16"><circle cx="8" cy="8" r="7" fill="#1028a0" stroke="#c8d0e8"/><path d="M5.500 6Q6 4 8 4t2.500 2Q10 7.500 8 8.500V10M8 11v2" fill="none" stroke="#fff" stroke-width="1.600"/></svg></button>
    <button class="a" aria-label="语言栏选项"><svg width="9" height="20" fill="none" stroke="#fff"><path d="M3.500 3V1.500h5v4H6M.5 3.500h5v4h-5z"/><path d="M2 14h5l-2.500 3z" fill="#fff" stroke="none"/></svg></button>
    <button class="b" aria-label="无线"><svg width="16" height="16"><rect width="16" height="16" rx="1" fill="#39a0f0"/><path d="M2 7q6-5 12 0M4.500 10q3.500-3 7 0" fill="none" stroke="#fff" stroke-width="1.700"/><circle cx="8" cy="12.500" r="1.400" fill="#fff"/></svg></button>
    <button class="b" aria-label="安全"><svg width="16" height="16"><path d="M8 1q3 2 6 2 1 8-6 12Q1 11 2 3q3 0 6-2z" fill="#58a828" stroke="#f4f4f4" stroke-width="1.500"/><path d="M9 3L5 9h3l-1 4 4-6H8z" fill="#fff"/></svg></button>
    <button class="b" aria-label="加速"><svg width="16" height="16"><circle cx="8" cy="8" r="8" fill="#48a838"/><path d="M0 8a8 8 0 0113-6L15 6q1 6-5 8Q3 14 0 8z" fill="#f8e020"/><path d="M8 4v8M4 8h8" stroke="#123" stroke-width="2.400"/></svg></button>
    <button class="b" aria-label="安全删除硬件"><svg width="16" height="16"><path d="M1 5l4-3h10v7l-3 2H1z" fill="#c8c8c8" stroke="#888"/><path d="M6 10l3 4 6-8" fill="none" stroke="#58d060" stroke-width="3"/></svg></button>
    <button class="b" aria-label="网络"><svg width="16" height="13" fill="#fff" stroke="#444" stroke-width=".5"><path d="M0 10h3v3H0zM3.500 8h3v5h-3zM7 6h3v7H7zM10 3h3v10h-3zM13 0h3v13h-3z"/></svg></button>
    <button class="b" aria-label="音量"><svg width="14" height="14" fill="#fff"><path d="M0 4h3l4-4v14L3 10H0z" stroke="#555" stroke-width=".5"/><path d="M9 4q2 3 0 6M11 2q3 5 0 10" fill="none" stroke="#eee"/></svg></button>
    <time datetime="2015-07-18T16:43">16:43<br>2015/7/18</time><button class="show" aria-label="显示桌面"></button></div>`);

/* ---------- desktop ---------- */
define('ps-desktop', `
  :host { display: flex; flex-direction: column; height: 100vh; position: relative; overflow: hidden; }
  .app { flex: 1; min-height: 0; display: flex; flex-direction: column; border: 0 solid #2c2c2c; border-width: 0 1px; }
  .work { flex: 1; min-height: 0; display: flex; }
  ps-panel { position: absolute; right: 1px; top: 70px; bottom: 56px; width: 241px; }
  layer-style-dialog { position: absolute; left: 853px; top: 114px; width: 663px; height: 537px; }
  wifi-badge { position: absolute; left: 98px; bottom: 110px; }
  net-meter { position: absolute; right: 29px; bottom: 125px; }
  ime-bar { position: absolute; right: 0; bottom: 148px; width: 186px; }
`, `
  <div class="app"><ps-menubar></ps-menubar><ps-optionsbar></ps-optionsbar>
    <div class="work"><ps-toolbox></ps-toolbox><ps-document></ps-document></div></div>
  <ps-panel></ps-panel>
  <layer-style-dialog role="dialog"></layer-style-dialog>
  <wifi-badge></wifi-badge><net-meter></net-meter><ime-bar></ime-bar>
  <win-taskbar></win-taskbar>`);
</script>
</body>
</html>
